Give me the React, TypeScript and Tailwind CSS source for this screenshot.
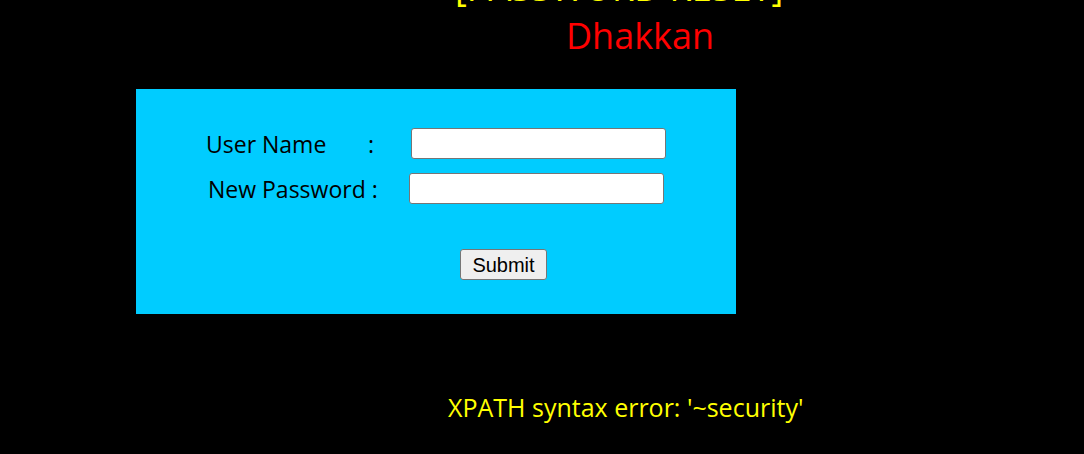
export default function App() {
  return (
    <div className="min-h-[454px] w-full overflow-hidden bg-black font-['Open_Sans',sans-serif]">
      <div className="-mt-[36px] text-[36px] leading-[48px]">
        <div className="ml-[455px] text-[#FFFF00]">[PASSWORD RESET]</div>
        <div className="ml-[566px] text-[#FF0000]">Dhakkan</div>
      </div>

      <div className="ml-[136px] mt-[29px] h-[225px] w-[600px] bg-[#00CCFF] pt-[39px] text-[23px] text-black">
        <form onSubmit={(e) => e.preventDefault()}>
          <div className="flex h-[45px] items-start">
            <span className="ml-[70px] mt-[-1px] w-[162px]">User Name</span>
            <span className="mt-[-1px] w-[43px]">:</span>
            <input
              type="text"
              className="h-[31px] w-[255px] rounded-[3px] border border-[#767676] bg-white px-1 text-[20px] outline-none"
            />
          </div>
          <div className="flex h-[45px] items-start">
            <span className="ml-[72px] mt-[-1px] w-[201px]">New Password :</span>
            <input
              type="text"
              className="h-[31px] w-[255px] rounded-[3px] border border-[#767676] bg-white px-1 text-[20px] outline-none"
            />
          </div>
          <div className="mt-[31px] flex">
            <button
              type="submit"
              className="ml-[324px] h-[31px] w-[87px] rounded-[3px] border border-[#767676] bg-[#EFEFEF] font-['Liberation_Sans',Arial,sans-serif] text-[20px] leading-none"
            >
              Submit
            </button>
          </div>
        </form>
      </div>

      <div className="ml-[448px] mt-[77px] text-[25px] leading-[32px] text-[#FFFF00]">
        XPATH syntax error: '~security'
      </div>
    </div>
  );
}
